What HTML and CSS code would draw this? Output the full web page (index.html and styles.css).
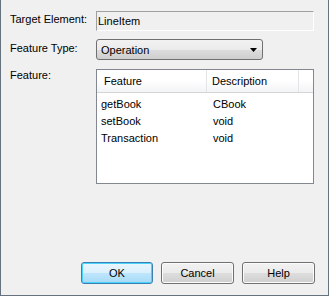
FILE: index.html
```html
<!DOCTYPE html>
<html lang="en">
<head>
  <meta charset="UTF-8">
  <title>Feature</title>
  <link rel="stylesheet" href="styles.css">
</head>
<body>
  <div class="dialog">
    <div class="form">
      <span class="label label-field">Target Element:</span>
      <div class="field">LineItem</div>

      <span class="label label-select">Feature Type:</span>
      <div class="select">
        <span>Operation</span>
        <svg class="arrow" width="7" height="4" viewBox="0 0 7 4"><path d="M0 0h7L3.5 4z" fill="#000"/></svg>
      </div>

      <span class="label label-list">Feature:</span>
      <div class="list">
        <div class="list-head">
          <span class="col col-name">Feature</span>
          <span class="col col-desc">Description</span>
          <span class="col col-fill"></span>
        </div>
        <div class="list-row"><span class="cell-name">getBook</span><span class="cell-desc">CBook</span></div>
        <div class="list-row"><span class="cell-name">setBook</span><span class="cell-desc">void</span></div>
        <div class="list-row"><span class="cell-name">Transaction</span><span class="cell-desc">void</span></div>
      </div>
    </div>

    <div class="buttons">
      <button class="btn btn-default">OK</button>
      <button class="btn">Cancel</button>
      <button class="btn">Help</button>
    </div>
  </div>
</body>
</html>
```

FILE: styles.css
```css
html, body {
  margin: 0;
  padding: 0;
}
body {
  font-family: "Liberation Sans", Arial, sans-serif;
  font-size: 11px;
  color: #000;
  background: #f0f0f0;
}
.dialog {
  box-sizing: border-box;
  width: 329px;
  height: 296px;
  display: flex;
  flex-direction: column;
  background: #f0f0f0;
  border-left: 1px solid #67727f;
  border-right: 1px solid #67727f;
  border-bottom: 1px solid #67727f;
  padding: 11px 13px 11px 9px;
}
.form {
  display: grid;
  grid-template-columns: 86px 218px;
  align-items: start;
}
.label {
  white-space: nowrap;
}
.label-field {
  padding-top: 2px;
}
.label-select {
  margin-top: 8px;
  padding-top: 3px;
}
.label-list {
  margin-top: 9px;
  padding-top: 0;
}
.field {
  box-sizing: border-box;
  height: 20px;
  line-height: 18px;
  padding-left: 1px;
  border-top: 1px solid #a0a0a0;
  border-left: 1px solid #a0a0a0;
  border-right: 1px solid #fff;
  border-bottom: 1px solid #fff;
}
.select {
  box-sizing: border-box;
  margin-top: 8px;
  width: 167px;
  height: 21px;
  display: flex;
  align-items: center;
  justify-content: space-between;
  padding: 0 5px 0 4px;
  border: 1px solid #707070;
  border-radius: 3px;
  background: linear-gradient(#f2f2f2 0%, #ebebeb 50%, #dddddd 51%, #cfcfcf 100%);
}
.list {
  box-sizing: border-box;
  margin-top: 9px;
  height: 115px;
  background: #fff;
  border: 1px solid #828790;
}
.list-head {
  display: flex;
  height: 22px;
  background: linear-gradient(#ffffff 0%, #ffffff 45%, #f3f4f6 100%);
  border-bottom: 1px solid #d5d5d5;
}
.col {
  box-sizing: border-box;
  line-height: 22px;
  border-right: 1px solid #e3e4e6;
}
.col-name {
  width: 110px;
  padding-left: 7px;
}
.col-desc {
  width: 92px;
  padding-left: 5px;
}
.col-fill {
  flex: 1;
  border-right: 0;
}
.list-head + .list-row {
  margin-top: 3px;
}
.list-row {
  display: flex;
  height: 17px;
  line-height: 17px;
}
.cell-name {
  width: 112px;
  padding-left: 4px;
}
.buttons {
  margin-top: auto;
  display: flex;
  justify-content: flex-end;
  gap: 8px;
  padding-right: 0;
}
.btn {
  box-sizing: border-box;
  width: 73px;
  height: 22px;
  margin: 0;
  padding: 0;
  font: inherit;
  color: #000;
  border: 1px solid #707070;
  border-radius: 3px;
  background: linear-gradient(#f2f2f2 0%, #ebebeb 50%, #dddddd 51%, #cfcfcf 100%);
  box-shadow: inset 0 0 0 1px #fcfcfc;
}
.btn-default {
  width: 72px;
  border-color: #3c7fb1;
  background: linear-gradient(#eaf6fd 0%, #d9f0fc 50%, #bee6fd 51%, #a7d9f5 100%);
  box-shadow: inset 0 0 0 1px #48d4fd;
}
```
